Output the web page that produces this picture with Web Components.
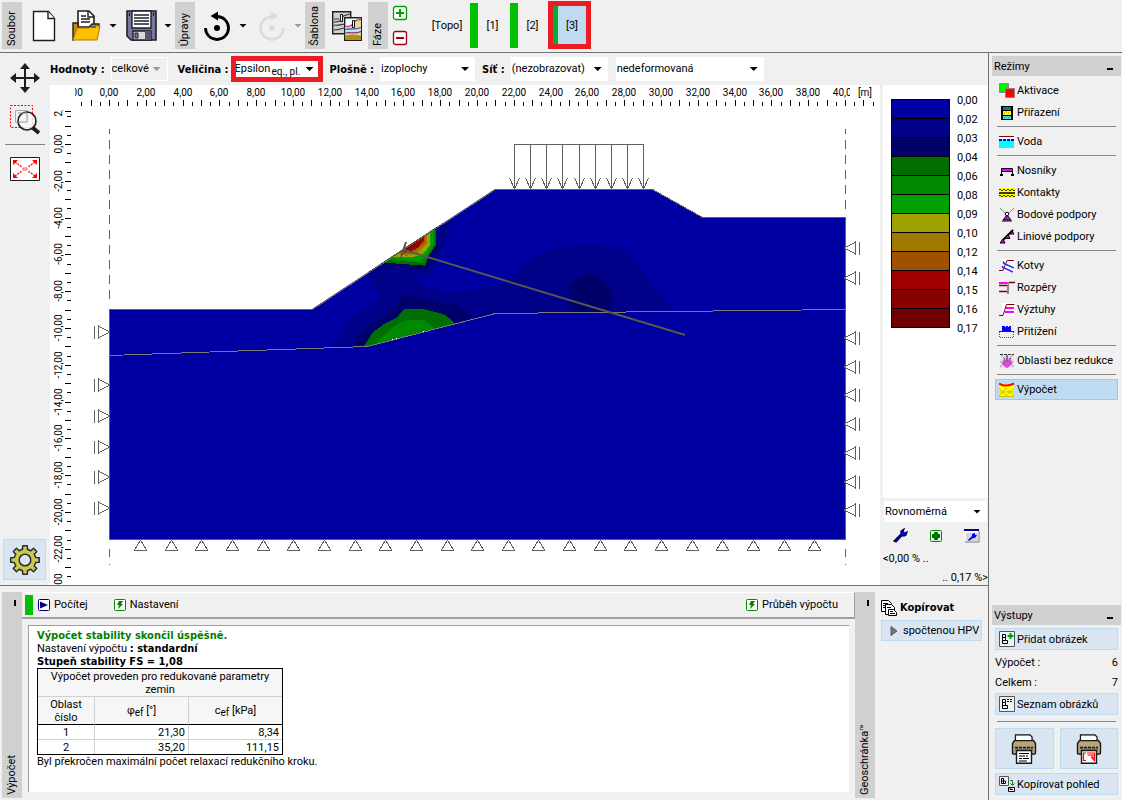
<!DOCTYPE html>
<html lang="cs">
<head>
<meta charset="utf-8">
<title>Výpočet stability</title>
<style>
html, body { margin: 0; height: 100%; }
body { background: #f0f0f0; color: #000; --bold: "DejaVu Sans Condensed", "DejaVu Sans", sans-serif; font: 11px/13px Roboto, "DejaVu Sans", sans-serif; }
</style>
</head>
<body>
<geo-app></geo-app>
<script>
const define = (name, css, html, setup) => {
  const tpl = document.createElement('template');
  tpl.innerHTML = `<style>*{box-sizing:border-box}:host{display:block;box-sizing:border-box}b{font-family:var(--bold)}button,select{font:inherit;color:inherit;margin:0;padding:0;border:0;border-radius:0;background:none}svg{display:block;flex:none}${css}</style>${html}`;
  customElements.define(name, class extends HTMLElement {
    constructor() {
      super();
      this.attachShadow({ mode: 'open' }).append(tpl.content.cloneNode(true));
    }
    connectedCallback() { if (setup && !this.ready) { this.ready = true; setup(this, this.shadowRoot); } }
  });
};

/* ---- icons ---- */
const PRINTER = `<path d="M5.500 7.500V1h14.500l2 2v4.500" fill="#fff" stroke="#1a1a1a" stroke-width="1.400"/><path d="M4.500 6.500h19l2 3v9.500q0 1-1 1h-21q-1 0-1-1v-9.500z" fill="#b8a678" stroke="#1a1a1a" stroke-width="1.400"/><path d="M6.300 1.800h13.200l1.700 1.500V6H6.300z" fill="#fff"/><path d="M5 13.500h18v3H5z" fill="#7c8474"/><path d="M5 13.500h18" stroke="#1a1a1a" stroke-width="1.500" stroke-dasharray="3 1"/><path d="M6.500 16.500h15v12.700h-15z" fill="#fff" stroke="#1a1a1a" stroke-width="1.400"/>`;
const ICONS = {
  'new': [24, 32, `<path d="M1.500 1.500h15l6 7v22h-21z" fill="#fff" stroke="#1e1e1e" stroke-width="1.400"/><path d="M16 1.500v7h6.500" fill="#fff" stroke="#1e1e1e" stroke-width="1.400"/>`],
  open: [30, 32, `<path d="M6 14V1h11l5 5v12H6z" fill="#fff" stroke="#1e1e1e" stroke-width="1.600"/><path d="M16 1v6h6M9 6h5M9 9h9M9 12h9" fill="none" stroke="#1e1e1e" stroke-width="1.400"/><path d="M1 30V13h5v4h11l3-3h7v4z" fill="#c98a00" stroke="#1e1e1e" stroke-width="1.400"/><path d="M1 30l4-12h12l3-2h8l-3 14z" fill="#ffc000" stroke="#b07800"/><path d="M18 17h6" stroke="#666" stroke-width="2"/>`],
  save: [32, 32, `<path d="M1 1h29v29H5l-4-4z" fill="#777799" stroke="#1e1e2a" stroke-width="1.600"/><path d="M6 1h19v17H6z" fill="#fff" stroke="#1e1e2a" stroke-width="1.400"/><path d="M8 5h15M8 8h15M8 11h15M8 14h15" stroke="#1e1e2a" stroke-width="1.300"/><path d="M7 30v-9h18v9z" fill="#d8d8d8" stroke="#1e1e2a" stroke-width="1.400"/><path d="M9 23h3v5H9z" fill="#777799" stroke="#1e1e2a"/><path d="M19 21h6v9h-6z" fill="#55556e"/><path d="M3 3h1v3H3zM27 3h1v3h-1z" fill="#111"/>`],
  undo: [28, 32, `<path d="M2.500 18A11.500 11.500 0 1 0 14 6.500" fill="none" stroke="currentColor" stroke-width="2.800"/><path d="M7.500 6L15 1.500v9z" fill="currentColor"/><circle cx="14" cy="18" r="3" fill="currentColor"/>`],
  redo: [28, 32, `<path d="M25.500 18A11.500 11.500 0 1 1 14 6.500" fill="none" stroke="currentColor" stroke-width="2.800"/><path d="M20.500 6L13 1.500v9z" fill="currentColor"/><circle cx="14" cy="18" r="3" fill="currentColor"/>`],
  template: [30, 32, `<path d="M.7 1.700h18v22h-18z" fill="#d0d0d0" stroke="#1e1e1e" stroke-width="1.400"/><path d="M2 12c3 0 4 0 6-1l2-4c2-2 5-2 8-3M2 9h5M2 15c4 1 8-1 11-1M2 20c4 0 7-1 10-2" fill="none" stroke="#333" stroke-width="1.200"/><path d="M8.500 4.500h2v7h-2z" fill="#fff" stroke="#111"/><path d="M12.700 7.700h17v22.600h-17z" fill="#fff" stroke="#1e1e1e" stroke-width="1.400"/><path d="M13.400 16h4l4-3 3-3h4.600v7c-6 3-10 0-15.600 2z" fill="#e6d890"/><path d="M13.400 19.500c5-2 10 1 15.600-1v3c-5 1-10 0-15.600 1z" fill="#a8ecec"/><path d="M13.400 22.500c5-1 10 1 15.600-1v3H13.400z" fill="#b4e060"/><path d="M13.400 25.500q8-2 15.600 0v4H13.400z" fill="#b88a18"/><path d="M13.400 16.500c3 0 4 0 6-1l3-4c2-2 4-2 6.600-2M13.400 19.500c5-2 10 1 15.600-2M13.400 23c5-1 10 1 15.600-1.500" fill="none" stroke="#8a2a8a" stroke-width="1.200"/><path d="M20.500 10.500h2v7h-2z" fill="#fff" stroke="#111"/>`],
  plus: [16, 16, `<rect x="1.500" y="1.500" width="13" height="13" rx="2" fill="#fff" stroke="#00a000" stroke-width="1.300"/><path d="M8 4v8M4 8h8" stroke="#00a000" stroke-width="2"/>`],
  minus: [16, 16, `<rect x="1.500" y="1.500" width="13" height="13" rx="2" fill="#fff" stroke="#a00010" stroke-width="1.300"/><path d="M4 8h8" stroke="#900010" stroke-width="2"/>`],
  move: [32, 32, `<path d="M16 3v26M3 16h26" stroke="#1e1e1e" stroke-width="2"/><path d="M16 1l5 6H11zM16 31l5-6H11zM1 16l6-5v10zM31 16l-6-5v10z" fill="#1e1e1e"/>`],
  zoom: [32, 32, `<path d="M1.500 1.500h22v22h-22z" fill="none" stroke="#f00" stroke-dasharray="2 1.500"/><path d="M6.500 6.500h12v12h-12z" fill="none" stroke="#aaa"/><circle cx="18" cy="17" r="9" fill="#f8f8f8" fill-opacity=".8" stroke="#1e1e1e" stroke-width="1.600"/><path d="M9 9h9v9H9" fill="none" stroke="#999"/><path d="M24 24l6 5" stroke="#1e1e1e" stroke-width="4"/>`],
  fit: [32, 26, `<path d="M1.500 1.500h29v23h-29z" fill="#fff" stroke="#1e1e1e"/><path d="M6 6l7 5M26 6l-7 5M6 20l7-5M26 20l-7-5" stroke="#f00" stroke-width="1.300" stroke-dasharray="2 1"/><path d="M4 4h5l-5 5zM28 4h-5l5 5zM4 22h5l-5-5zM28 22h-5l5-5z" fill="#f00"/><path d="M13 13h2M17 13h2M15 11v4M17 11v4" stroke="#f55"/>`],
  gear: [32, 32, `<g stroke="#2c2c2c" stroke-width="1.500" stroke-linejoin="round"><path d="" fill="#c8c850"/><circle cx="16" cy="16" r="5.800" fill="#d9e6f2"/></g>`],
  aktivace: [16, 16, `<path d="M.5.500h9v9h-9z" fill="#00f000" stroke="#888"/><path d="M6.500 5.500h9v9h-9z" fill="#f00" stroke="#888"/>`],
  prirazeni: [16, 16, `<path d="M2 1h12v14H2z" fill="#000"/><path d="M4 2h8v3H4z" fill="#207070"/><path d="M4 6h8v4H4z" fill="#ff0"/><path d="M4 11h8v3H4z" fill="#4de"/><path d="M5 8h1M9 8h1M7 7h1M5 13l2-2M9 13l2-2" stroke="#a80"/>`],
  voda: [16, 16, `<path d="M0 2h15v12H0z" fill="#fff"/><path d="M0 6h15v8H0z" fill="#0ff"/><path d="M0 2.500h15" stroke="#800000"/><path d="M0 6h15" stroke="#00f" stroke-width="2" stroke-dasharray="3 1"/>`],
  nosniky: [16, 16, `<path d="M2.500 12V6.500h11V12" fill="none" stroke="#000"/><path d="M2.500 5.500h11v3h-11z" fill="#e0f" stroke="#000"/><path d="M1 11h3v2H1zM12 11h3v2h-3z" fill="#000"/>`],
  kontakty: [16, 16, `<path d="M0 3h16v10H0z" fill="#ff0"/><path d="M0 5l1-1 2 2 2-2 2 2 2-2 2 2 2-2 2 2 1-1M0 11l1-1 2 2 2-2 2 2 2-2 2 2 2-2 2 2 1-1" fill="none" stroke="#000" stroke-width=".8"/><path d="M0 8h16" stroke="#000" stroke-width="1.500"/>`],
  bodove: [16, 16, `<path d="M1 1l6 6M15 1L9 7" stroke="#888"/><path d="M8 8l-4 5h8z" fill="#c0f" stroke="#000"/><circle cx="8" cy="7" r="1.800" fill="#fff" stroke="#000"/><path d="M3 14h10" stroke="#000"/>`],
  liniove: [16, 16, `<path d="M3 12L14 1" stroke="#000" stroke-width="2"/><path d="M1 14h5l-2-4zM6 9.500h5l-2-4zM11 5h4l-2-3z" fill="#e0f" stroke="#000"/>`],
  kotvy: [16, 16, `<path d="M2 1h14v13H2z" fill="#fff"/><path d="M0 12.500h4L8 2.500h7" fill="none" stroke="#800000"/><path d="M4 5l11 5M3 9l11 5M4 3.500l2 3M3 8l2 3" stroke="#33e" stroke-width="1.400"/>`],
  rozpery: [16, 16, `<path d="M0 3h9" stroke="#f0f" stroke-width="2"/><path d="M0 5.500h8M0 11.500h8M10 2.500h6" stroke="#800000" stroke-width="1.500"/><path d="M9 2v12" stroke="#888" stroke-width="2"/>`],
  vyztuhy: [16, 16, `<path d="M3 1h13v13H3z" fill="#fff"/><path d="M0 13.500h4L7.500 2.500h8" fill="none" stroke="#800000"/><path d="M7 6h8M6 10h9" stroke="#f0f" stroke-width="2"/>`],
  pritizeni: [16, 16, `<path d="M3 2h3v1h1V2h2v1h1V2h2v5H3z" fill="#00f"/><path d="M0 7.500h15" stroke="#800000"/><path d="M.5 8v5.500h14V8" fill="none" stroke="#555" stroke-dasharray="1 1"/>`],
  oblasti: [16, 16, `<path d="M1 1h14v14H1z" fill="#e4e4e4"/><path d="M1 1l14 13M15 1L1 14M1 8l7 7 7-7" stroke="#999" fill="none"/><path d="M5 5h1v2h4V5h2l1 5-3 4H6l-3-4z" fill="#e020e0" fill-opacity=".8"/><path d="M7 2h2v7H7z" fill="#777"/><path d="M1 1.500h14" stroke="#333" stroke-dasharray="3 1"/>`],
  vypocet: [16, 16, `<path d="M0 2h15v13H0z" fill="#ff0"/><path d="M0 6l4 4 3-4 4 4 4-4M0 14l4-4 3 4 4-4 4 4M0 10h15M0 14.500h15" fill="none" stroke="#c8b400" stroke-width=".8"/><path d="M0 1.500q7 4 15 0" fill="none" stroke="#f00" stroke-width="2"/>`],
  wrench: [16, 16, `<path d="M2 13l7-7V3l3-2-1 3 2 1 2-1-1 3-2 1-2-.5L4 14z" fill="#00f" stroke="#000060" stroke-width="1.300"/>`],
  add: [14, 14, `<rect x="1.500" y="1.500" width="11" height="11" rx="1" fill="#dff5df" stroke="#008800"/><path d="M7 3v8M3 7h8" stroke="#007000" stroke-width="4"/>`],
  win: [16, 16, `<path d="M1 1h14v13H1z" fill="#fff"/><path d="M2 5h12v8H2z" fill="#d5d5d5"/><path d="M0 1h15v2H0z" fill="#000090"/><path d="M15 3v11H1" fill="none" stroke="#777"/><path d="M4 12l4-4V6l3-1v2h2L11 10H9l-4 3z" fill="#00f"/>`],
  play: [12, 12, `<rect x=".5" y=".5" width="11" height="11" rx="1" fill="#fff" stroke="#000080"/><path d="M2 2.500l8 3.500-8 3.500z" fill="#000080"/>`],
  bolt: [12, 12, `<rect x=".5" y=".5" width="11" height="11" rx="1" fill="#fff" stroke="#008800"/><path d="M5 2h4L7 5h2L4 10l1-4H3z" fill="#008000"/>`],
  copy: [16, 16, `<g fill="#fff" stroke="#000"><path d="M.5.500h7l3 3v8H.5z"/><path d="M2 3.500h5M2 5.500h5M2 7.500h3"/><path d="M4.500 4.500h6l3 3v7h-9z"/><path d="M7.500 9.500h5l3 3v3h-8z"/><path d="M6 7.500h4M9 11.500h3M9 13.500h5"/></g>`],
  tri: [8, 10, `<path d="M1 .5l6 4.500-6 4.500z" fill="#777" stroke="#555"/>`],
  addpic: [16, 16, `<path d="M.5.500h15v15H.5z" fill="#eef2f5" stroke="#555"/><path d="M3.500 12.500v-9h3v3M3.500 6.500h3v3M3.500 9.500h5v3h-5" fill="none" stroke="#000"/><path d="M11.500 2v6M8.500 5h6" stroke="#00a000" stroke-width="2"/>`],
  listpic: [16, 16, `<path d="M.5.500h15v15H.5z" fill="#eef2f5" stroke="#555"/><path d="M3.500 12.500v-9h3v3M3.500 6.500h3v3M3.500 9.500h5v3h-5" fill="none" stroke="#000"/><path d="M8 3.500h6M8 5.500h6" stroke="#000" stroke-dasharray="2 1"/>`],
  copyview: [16, 16, `<path d="M.5.500h9v9h-9z" fill="#eef2f5" stroke="#555"/><path d="M2.500 7.500v-5h2v2.500h-2M4.500 5v2.500M2.500 7.500h4V5h-2" fill="none" stroke="#000"/><path d="M11 4.500h2.500V9M11.500 7.500l2 2 2-2" fill="none" stroke="#009000"/><path d="M9.500 11.500h6v4h-6zM11 11.500v2h3" fill="#fff" stroke="#000"/>`],
  print: [28, 30, PRINTER + `<path d="M9 19.500h10M9 22h6m1 0h2M9 24.500h3m1 0h6M9 27h8" stroke="#000" stroke-width="1.200"/>`],
  printred: [28, 30, PRINTER + `<path d="M11 19H8.500v7.500H11M12 19h7.500v7.500l-2.500-2.500v-3h-4.500M17 21h2.500M17 23.500h2.500" fill="none" stroke="#f00" stroke-width="1.200"/>`]
};
/* eight-toothed outline for the settings gear */
ICONS.gear[2] = ICONS.gear[2].replace('d=""', () => {
  const p = [];
  for (let i = 0; i < 8; i++)
    for (const [off, r] of [[-13, 11], [-9, 14.5], [9, 14.5], [13, 11]]) {
      const a = (i * 45 + off) * Math.PI / 180;
      p.push(`${(16 + r * Math.sin(a)).toFixed(1)} ${(16 - r * Math.cos(a)).toFixed(1)}`);
    }
  return `d="M${p.join('L')}z"`;
});
const iconMarkup = name => {
  const [w, h, body] = ICONS[name];
  return `<svg width="${w}" height="${h}" viewBox="0 0 ${w} ${h}" aria-hidden="true">${body}</svg>`;
};
define('ui-icon', ':host{display:inline-block;flex:none}', '<span style="display:contents"></span>', (el, root) => {
  root.querySelector('span').innerHTML = iconMarkup(el.getAttribute('name'));
});

/* ---- small controls ---- */
define('ui-arrow', ':host{width:8px;height:4px;background:#000;clip-path:polygon(0 0,100% 0,50% 100%);flex:none}:host([off]){background:#999}', '');

define('side-caption', `:host{width:20px;flex:none;background:#d0d0d0;display:flex;flex-direction:column;align-items:center;justify-content:flex-end;padding:3px 0}
  i{display:none;width:2px;height:6px;background:#000;margin:5px 0 auto 5px}
  :host([pin]) i{display:block}
  span{writing-mode:vertical-rl;text-orientation:sideways;transform:rotate(180deg);line-height:16px;white-space:nowrap}`, '<i></i><span><slot></slot></span>');

define('ui-select', `:host{display:flex;align-items:center;gap:6px;height:24px}
  label{font-family:var(--bold);font-weight:bold;white-space:nowrap}
  label:empty{display:none}
  .box{display:grid;align-items:center;width:var(--w);height:100%;background:#fff}
  .box>*{grid-area:1/1}
  select{appearance:none;width:100%;height:100%;padding:0 0 1px 1px;outline:none;opacity:1}
  ui-arrow{justify-self:end;margin-right:6px;pointer-events:none}
  :host([off]) .box{background:#f0f0f0;border:1px solid #fff}
  :host([off]) select{padding-left:0}
  sub{font-size:10px;line-height:10px;margin:6px 0 0 38px;vertical-align:0;pointer-events:none}
  :host([mark]) .box{height:26px;outline:5px solid #ed1c24;outline-offset:-5px;padding:0 3px}`,
  '<label for="s"></label><div class="box"><select id="s"><option></option></select><ui-arrow></ui-arrow></div>', (el, root) => {
    root.querySelector('label').textContent = el.getAttribute('label') || '';
    const s = root.querySelector('select');
    s.options[0].textContent = el.getAttribute('value');
    if (!el.getAttribute('label')) s.setAttribute('aria-label', el.getAttribute('name'));
    if (el.hasAttribute('off')) root.querySelector('ui-arrow').setAttribute('off', '');
    const sub = el.getAttribute('sub');
    if (sub) { const n = document.createElement('sub'); n.textContent = sub; s.after(n); }
  });

define('push-button', `:host{display:block}
  button{display:flex;align-items:center;gap:2px;width:100%;height:100%;padding:0 3px;background:#d9e6f2;border:1px solid #bcdcf4;white-space:nowrap}
  :host([center]) button{justify-content:center}`, '<button type="button"><slot></slot></button>', (el, root) => {
    const n = el.getAttribute('label'); if (n) root.querySelector('button').setAttribute('aria-label', n);
  });

/* ---- top toolbar ---- */
define('main-toolbar', `:host{display:flex;height:53px;padding:2px 0 3px 2px;border-bottom:1px solid #707070}
  button{display:flex;align-items:center;justify-content:center;flex:none}
  .g{display:flex;align-items:center;flex:none}
  .off{color:#dcdcdc}
  .pm{display:flex;flex-direction:column;justify-content:space-between;width:16px;padding:3px 0 3px;margin:0 22px 0 4px}
  .ph{display:flex;align-items:stretch;margin:1px 0 1px}
  .ph button{height:45px}
  .ph i{width:8px;background:#00c000}
  .cur{position:relative;width:33px;background:#bfdbf2;border-left:5px solid #00b030}
  .cur::after{content:"";position:absolute;inset:-2px -5px -1px -10px;border:5px solid #ed1c24}`,
  `<side-caption>Soubor</side-caption>
  <div class="g" style="padding-left:10px;gap:16px"><button aria-label="Nový"><ui-icon name="new"></ui-icon></button>
   <button aria-label="Otevřít" style="gap:7px"><ui-icon name="open"></ui-icon><ui-arrow></ui-arrow></button></div>
  <div class="g" style="padding:0 3px 0 9px"><button aria-label="Uložit" style="gap:6px"><ui-icon name="save"></ui-icon><ui-arrow></ui-arrow></button></div>
  <side-caption>Úpravy</side-caption>
  <div class="g" style="padding:0 3px 0 8px;gap:11px"><button aria-label="Zpět" style="gap:8px"><ui-icon name="undo"></ui-icon><ui-arrow></ui-arrow></button>
   <button class="off" aria-label="Vpřed" style="gap:8px" disabled><ui-icon name="redo"></ui-icon><ui-arrow off></ui-arrow></button></div>
  <side-caption>Šablona</side-caption>
  <div class="g" style="padding:0 6px 0 7px"><button aria-label="Šablona"><ui-icon name="template"></ui-icon></button></div>
  <side-caption>Fáze</side-caption>
  <div class="pm"><button aria-label="Přidat fázi"><ui-icon name="plus"></ui-icon></button><button aria-label="Odebrat fázi"><ui-icon name="minus"></ui-icon></button></div>
  <div class="ph"><button style="width:40px;padding-right:6px">[Topo]</button><i></i><button style="width:29px">[1]</button><i style="margin-left:3px"></i><button style="width:29px">[2]</button><button class="cur" style="margin-left:6px">[3]</button></div>`);

/* ---- view options ---- */
define('view-options', ':host{display:flex;align-items:center;height:32px}',
  `<ui-select label="Hodnoty :" value="celkové" off style="--w:57px"></ui-select>
   <ui-select label="Veličina :" value="Epsilon" sub="eq., pl." mark style="--w:92px;margin-left:10px;gap:2px"></ui-select>
   <ui-select label="Plošně :" value="izoplochy" style="--w:95px;margin-left:7px"></ui-select>
   <ui-select label="Síť :" value="(nezobrazovat)" style="--w:97px;margin-left:7px"></ui-select>
   <ui-select name="Deformace" value="nedeformovaná" style="--w:148px;margin-left:8px"></ui-select>`);

define('view-tools', `:host{width:50px;display:flex;flex-direction:column;align-items:center;padding:9px 0 5px}
  button{display:flex;flex:none}hr{width:40px;border:0;border-top:1px solid #808080;margin:8px 0 11px}
  push-button{width:43px;height:41px;margin:auto 1px 0 0}`,
  `<button aria-label="Posun"><ui-icon name="move"></ui-icon></button><button aria-label="Lupa" style="margin-top:10px"><ui-icon name="zoom"></ui-icon></button><hr>
   <button aria-label="Zobrazit vše"><ui-icon name="fit"></ui-icon></button><push-button center label="Nastavení zobrazení"><ui-icon name="gear"></ui-icon></push-button>`);

/* ---- section drawing ---- */
define('section-plot', `:host{background:#fff;min-width:0;min-height:0;overflow:hidden}
  svg{width:100%;height:100%}
  text{font:10px Roboto,"Liberation Sans",sans-serif;text-anchor:middle;fill:#000}`,
  '<svg viewBox="50 85 830 500" preserveAspectRatio="xMinYMin meet" role="img" aria-label="Řez modelem"></svg>', (el, root) => {
    const M = 92 / 5, X0 = 109, Y0 = 144, out = [];
    const X = m => Math.round(X0 + m * M), Y = m => Math.round(Y0 - m * M);
    const poly = (fill, pts) => `<polygon fill="${fill}" points="${pts}"/>`;
    let ticks = '';
    for (let k = -3; k <= 83; k++) ticks += `M${X(k / 2)}.5 ${k % 2 ? 102 : 100}V106`;
    for (let k = -47; k <= 3; k++) ticks += `M${k % 2 ? 67 : 65} ${Y(k / 2)}.5H71`;
    out.push(`<path d="${ticks}M65 111.500H71" stroke="#000" shape-rendering="crispEdges"/>`);
    out.push('<defs><clipPath id="ch"><path d="M75 85h775v20H75z"/></clipPath><clipPath id="cv"><path d="M50 110h15v475H50z"/></clipPath></defs>');
    out.push('<g clip-path="url(#ch)">');
    for (let m = -2; m <= 40; m += 2) out.push(`<text x="${X(m)}" y="96">${m},00</text>`);
    out.push('</g><text x="865" y="96">[m]</text><g clip-path="url(#cv)">');
    for (let m = -22; m <= 2; m += 2) out.push(`<text transform="translate(62 ${Y(m)}) rotate(-90)">${m},00</text>`);
    out.push('</g><text transform="translate(62 579) rotate(-90)">00</text>');
    out.push('<clipPath id="soil"><path d="M109 309H312L495 189H652L702 217H845V539H109z"/></clipPath><g clip-path="url(#soil)" shape-rendering="crispEdges">');
    out.push('<path d="M109 180H845V539H109z" fill="#0000a2"/>');
    out.push('<g transform="translate(300 170) scale(.33333)">');
    out.push(poly('#000088', '446,150 446,195 418,262 387,317 345,317 372,352 440,366 520,363 600,345 640,318 690,270 750,240 830,225 900,226 975,243 1010,275 1050,335 1090,385 1115,424 584,431 520,445 205,529 102,530 150,445 210,410 248,378 220,345 205,318 200,290'));
    out.push(poly('#00006a', '412,150 413,240 395,280 375,302 340,298 280,288 225,284'));
    out.push(poly('#00006a', '155,530 190,480 250,440 285,415 308,373 325,382 370,383 400,395 470,405 520,440 466,460 205,529'));
    out.push(poly('#00006a', '808,345 868,309 900,318 920,340 935,372 935,427 825,427 808,395'));
    out.push(poly('#006e00', '192,529 218,488 250,463 290,443 313,417 370,417 435,434 466,460 205,529'));
    out.push(poly('#008800', '228,522 240,505 285,467 320,450 372,450 403,475'));
    out.push(poly('#006e00', '403,160 408,190 408,225 385,260 376,287 320,283 240,277'));
    out.push(poly('#008800', '404,160 405,224 382,260 372,279 320,275 256,270'));
    out.push(poly('#00a000', '398,165 399,226 376,259 360,272 318,268 265,264'));
    out.push(poly('#a0a000', '390,170 390,226 366,256 330,262 278,260'));
    out.push(poly('#a07800', '382,170 380,222 355,248 320,258 285,250'));
    out.push(poly('#a05000', '376,180 375,217 348,242 315,252 290,246'));
    out.push(poly('#a00000', '370,180 371,213 352,234 325,246 295,243'));
    out.push(poly('#880000', '362,190 364,208 345,227 322,238 300,238'));
    out.push('<path d="M370 483h6v4h-6zM276 507h4v4h-4zM288 504h4v4h-4z" fill="#fff"/>');
    out.push('</g></g>');
    out.push('<g fill="none" stroke="#606060" shape-rendering="crispEdges"><path d="M109.500 309.500H312.500L495.500 189.500H652.500L702.500 217.500H845.500V539.500H109.500z"/><path d="M109.500 355.500L367.500 346.500L495.500 313.500L845.500 309.500" stroke="#7a7a78"/>');
    let d = '';
    for (const x of [109, 845]) {
      d += `M${x}.5 129v5`;
      for (let y = 140; y < (x < 500 ? 305 : 212); y += 15) d += `M${x}.5 ${y}v9`;
      d += `M${x}.5 549v8m0 7v1`;
    }
    for (const y of [332, 385, 416, 447, 477, 508]) d += `M94.500 ${y - 6}v13M98.500 ${y - 6}v12l11-6z`;
    for (const y of [248, 278, 338, 367, 395, 424, 453, 482, 510]) d += `M859.500 ${y - 6}v13M855.500 ${y - 6}v12l-11-6z`;
    for (let i = 0; i < 23; i++) { const x = Math.round(140 + i * 30.65); d += `M${x}.5 540l-6 10h12z`; }
    d += 'M514.500 189V144.500H643.500V189';
    for (let i = 0; i < 9; i++) { const x = Math.round(514 + i * 16.125); d += `M${x}.5 145v43m-5-10l5 11 5-11`; }
    out.push(`<path d="${d}"/></g><path d="M404 250L685 335M406 242L401 257" stroke="#58584e" stroke-width="2"/>`);
    root.querySelector('svg').innerHTML = out.join('');
  });

/* ---- colour scale ---- */
define('colour-scale', `:host{display:flex;flex-direction:column;width:105px}
  .scale{flex:1;background:#fff;padding:14px 0 0 8px;display:flex;gap:7px}
  .bars{width:59px;height:229px;border:1px solid #000;border-bottom:0}
  .bars i{display:block;height:19px;border-bottom:1px solid #000}
  .nums{margin-top:-5px}.nums div{height:19px}
  ui-select{height:21px;margin:3px 0 0 1px}
  .ic{display:flex;justify-content:space-between;align-items:center;padding:6px 8px 0 9px}
  .ic button{display:flex}
  p{margin:8px 0 0}p+p{text-align:right;margin:6px 0 1px}`,
  `<div class="scale"><div class="bars"></div><div class="nums"></div></div>
   <ui-select name="Stupnice" value="Rovnoměrná" style="--w:103px"></ui-select>
   <div class="ic"><button aria-label="Nastavení"><ui-icon name="wrench"></ui-icon></button><button aria-label="Přidat"><ui-icon name="add"></ui-icon></button><button aria-label="Okno"><ui-icon name="win"></ui-icon></button></div>
   <p>&lt;0,00 % ..</p><p>.. 0,17 %&gt;</p>`, (el, root) => {
    root.querySelector('.bars').innerHTML = '0000a2 000088 00006a 006e00 008800 00a000 a0a000 a07800 a05000 a00000 880000 6e0000'.split(' ').map(c => `<i style="background:#${c}"></i>`).join('');
    root.querySelector('.nums').innerHTML = '0,00 0,02 0,03 0,04 0,06 0,08 0,09 0,10 0,12 0,14 0,15 0,16 0,17'.split(' ').map(t => `<div>${t}</div>`).join('');
  });

/* ---- right column ---- */
define('panel-title', ':host{display:flex;justify-content:space-between;height:20px;background:#d0d0d0;padding:4px 8px 0 2px}i{width:6px;height:2px;background:#000;margin-top:8px}', '<slot></slot><i></i>');
define('mode-item', `:host{display:block;height:22px;padding:0 3px}
  button{display:flex;align-items:center;gap:2px;width:100%;height:21px;padding:0 3px;border:1px solid transparent;white-space:nowrap}
  :host([on]) button{background:#bfdbf2;border-color:#99c9ef}`, '<button type="button"><span></span><slot></slot></button>', (el, root) => {
    root.querySelector('span').innerHTML = iconMarkup(el.getAttribute('icon'));
  });
define('side-panel', `:host{display:flex;flex-direction:column;width:134px;border-left:1px solid #707070;padding:3px 1px 5px 3px}
  nav{padding-top:4px}
  hr{border:0;border-top:1px solid #888;margin:3px 5px}
  nav hr{margin:2px 5px 4px}
  .outs{margin-top:auto}
  .in{padding:3px 3px 0}
  .in push-button{height:22px}
  .row{display:flex;justify-content:space-between;height:20px;align-items:center}
  .pr{display:flex;gap:6px;margin-bottom:4px}
  .in .pr push-button{flex:1;height:41px}`,
  `<panel-title>Režimy</panel-title>
  <nav><mode-item icon="aktivace">Aktivace</mode-item><mode-item icon="prirazeni">Přiřazení</mode-item><hr>
  <mode-item icon="voda">Voda</mode-item><hr>
  <mode-item icon="nosniky">Nosníky</mode-item><mode-item icon="kontakty">Kontakty</mode-item><mode-item icon="bodove">Bodové podpory</mode-item><mode-item icon="liniove">Liniové podpory</mode-item><hr>
  <mode-item icon="kotvy">Kotvy</mode-item><mode-item icon="rozpery">Rozpěry</mode-item><mode-item icon="vyztuhy">Výztuhy</mode-item><mode-item icon="pritizeni">Přitížení</mode-item><hr>
  <mode-item icon="oblasti">Oblasti bez redukce</mode-item><hr><mode-item icon="vypocet" on>Výpočet</mode-item></nav>
  <div class="outs"><panel-title>Výstupy</panel-title><div class="in">
  <push-button><ui-icon name="addpic"></ui-icon>Přidat obrázek</push-button>
  <div class="row" style="margin-top:2px"><span>Výpočet :</span><span>6</span></div><div class="row"><span>Celkem :</span><span>7</span></div>
  <push-button style="margin-top:1px"><ui-icon name="listpic"></ui-icon>Seznam obrázků</push-button>
  <hr style="margin:6px 2px"><div class="pr"><push-button center label="Tisk protokolu"><ui-icon name="print"></ui-icon></push-button><push-button center label="Tisk obrázku"><ui-icon name="printred"></ui-icon></push-button></div>
  <push-button><ui-icon name="copyview"></ui-icon>Kopírovat pohled</push-button></div></div>`);

/* ---- bottom area ---- */
define('calc-panel', `:host{display:flex;border-top:1px solid #707070;padding:6px 0 2px 2px;height:215px}
  .main{flex:1;min-width:0;display:flex;flex-direction:column;padding-bottom:6px}
  .bar{display:flex;align-items:center;height:27px;padding:2px 16px 3px 3px;border-bottom:2px solid #a0a0a0;border-right:1px solid #a0a0a0;border-top:1px solid #fff}
  .bar i{width:8px;height:20px;background:#00c000;margin-right:5px}
  .bar button{display:flex;align-items:center;gap:4px;margin-right:26px}
  .bar button:last-child{margin:0 0 0 auto}
  .res{flex:1;margin:6px 6px 0 6px;background:#fff;border:1px solid #a0a0a0;border-width:1px 0 0 1px;padding:3px 8px}
  .ok{color:#008000}
  p{margin:0;height:13px}
  table{border:1px solid #000;border-spacing:0;width:246px;table-layout:fixed}
  th,td{padding:0;border:0 solid #d0d0d0;border-width:0 1px 1px 0;font-weight:normal;line-height:13px}
  th{height:28px;background:#f6f6f6}
  tr>:last-child{border-right:0}
  thead tr:last-child th{border-bottom-color:#000}
  td{height:15px;text-align:right;padding-right:3px}td:first-child{text-align:center;padding:0}
  tbody tr:last-child td{border-bottom:0;height:14px}
  sub{font-size:10px;line-height:0;vertical-align:-2px}
  .clip{width:113px;padding:8px 6px 0}
  .clip h2{display:flex;align-items:center;gap:3px;margin:0 0 4px;font:bold 11px/16px var(--bold)}
  .clip push-button{height:21px;width:101px}`,
  `<side-caption pin>Výpočet</side-caption>
  <div class="main"><div class="bar"><i></i><button><ui-icon name="play"></ui-icon>Počítej</button><button><ui-icon name="bolt"></ui-icon>Nastavení</button><button><ui-icon name="bolt"></ui-icon>Průběh výpočtu</button></div>
  <div class="res"><p class="ok"><b>Výpočet stability skončil úspěšně.</b></p><p>Nastavení výpočtu <b>: standardní</b></p><p><b>Stupeň stability FS = 1,08</b></p>
  <table><colgroup><col style="width:57px"><col style="width:94px"><col></colgroup><thead><tr><th colspan="3">Výpočet proveden pro redukované parametry zemin</th></tr><tr><th>Oblast číslo</th><th>φ<sub>ef</sub> [°]</th><th>c<sub>ef</sub> [kPa]</th></tr></thead>
  <tbody><tr><td>1</td><td>21,30</td><td>8,34</td></tr><tr><td>2</td><td>35,20</td><td>111,15</td></tr></tbody></table>
  <p>Byl překročen maximální počet relaxací redukčního kroku.</p></div></div>
  <side-caption pin>Geoschránka™</side-caption>
  <div class="clip"><h2><ui-icon name="copy"></ui-icon>Kopírovat</h2><push-button><ui-icon name="tri" style="margin:0 3px 0 5px"></ui-icon>spočtenou HPV</push-button></div>`);

define('geo-app', `:host{display:flex;flex-direction:column;min-height:100vh}
  .body{flex:1;display:flex;min-height:0}
  .left{flex:1;min-width:0;display:flex;flex-direction:column}
  .work{flex:1;display:flex;min-height:0}
  .col{flex:1;min-width:0;display:flex;flex-direction:column}
  .view{flex:1;display:flex;min-height:0;gap:3px}
  section-plot{flex:1}`,
  `<main-toolbar></main-toolbar><div class="body"><div class="left"><div class="work"><view-tools></view-tools>
   <div class="col"><view-options></view-options><div class="view"><section-plot></section-plot><colour-scale></colour-scale></div></div></div><calc-panel></calc-panel></div>
   <side-panel></side-panel></div>`);
</script>
</body>
</html>
